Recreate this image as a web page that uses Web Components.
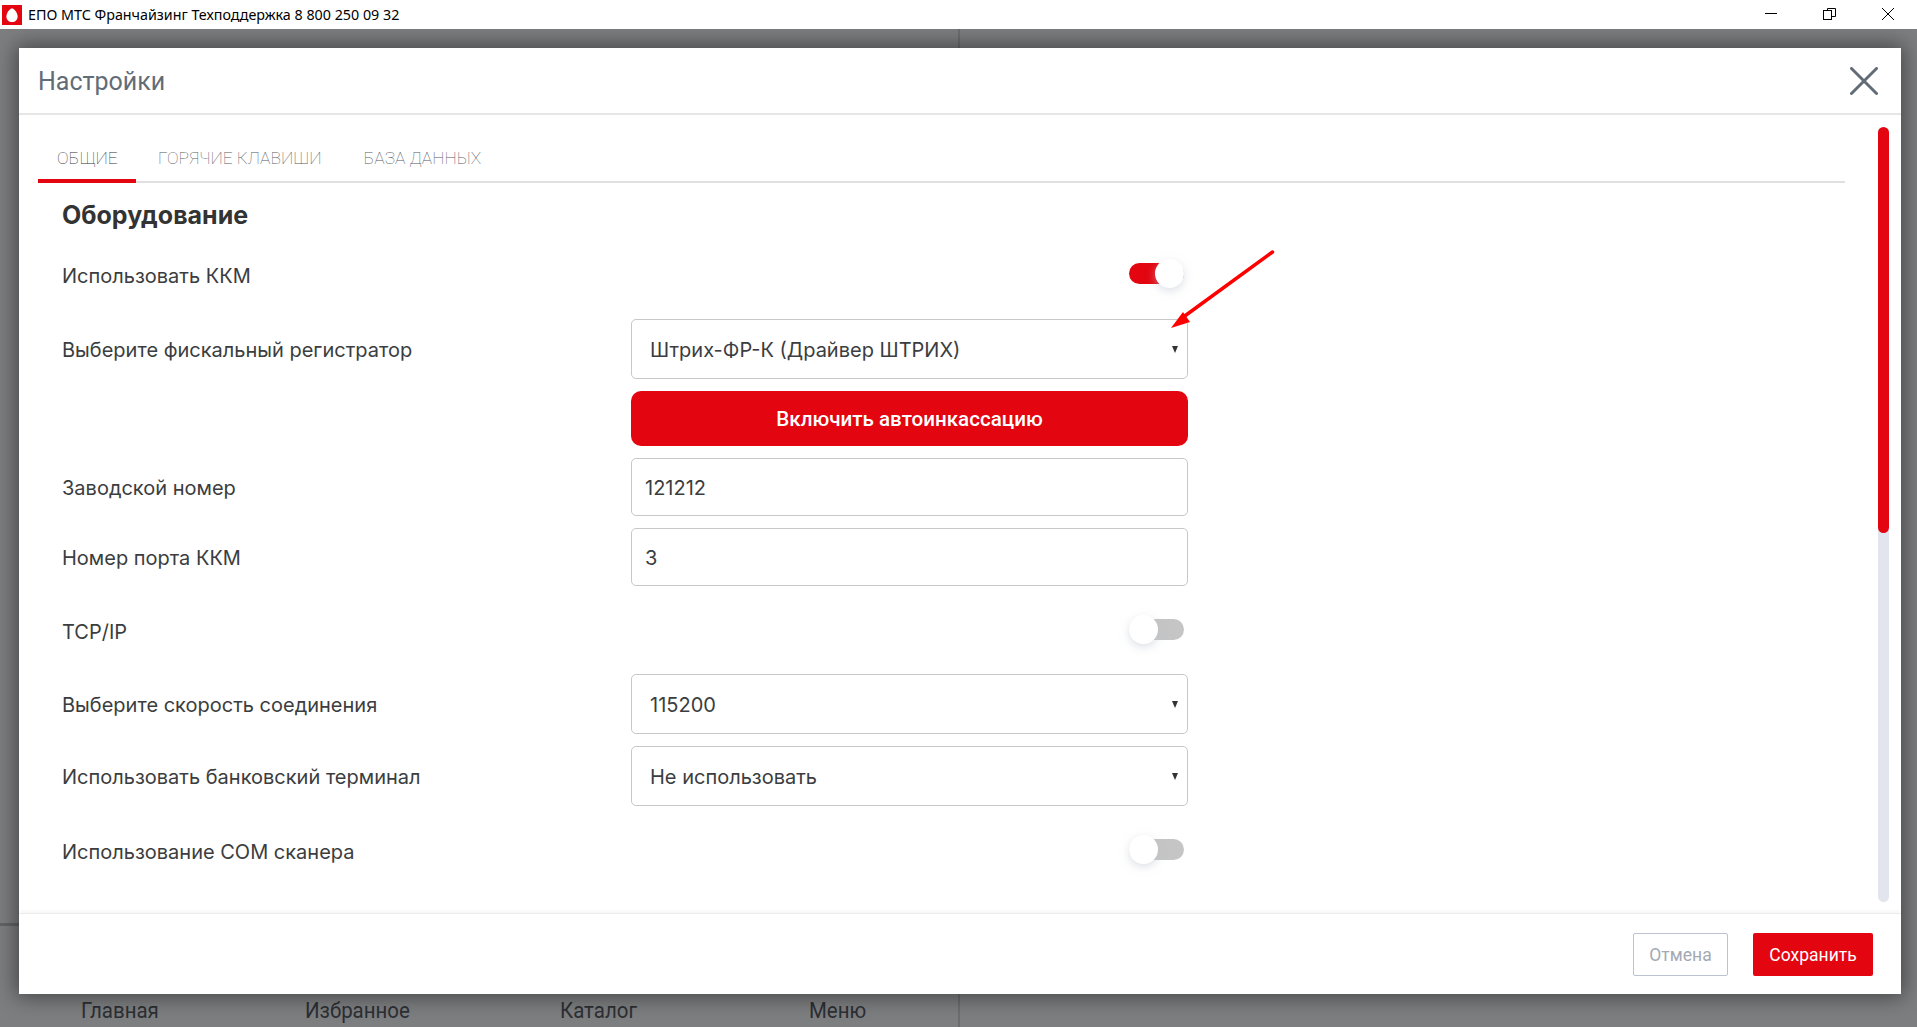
<!doctype html>
<html lang="ru"><head><meta charset="utf-8"><title>Настройки</title>
<style>
html,body{margin:0;height:100%;overflow:hidden;background:#fff}
body{display:flex;flex-direction:column;font-family:Roboto,sans-serif}
</style></head><body>
<app-titlebar></app-titlebar>
<app-stage>
  <settings-dialog>
    <span slot="title">Настройки</span>
    <settings-tabs slot="tabs"></settings-tabs>
    <h-section>Оборудование</h-section>
    <form-row label="Использовать ККМ" style="height:60px;margin-bottom:14px"><ui-toggle on></ui-toggle></form-row>
    <form-row label="Выберите фискальный регистратор" style="margin-bottom:12px"><ui-select value="Штрих-ФР-К (Драйвер ШТРИХ)"></ui-select></form-row>
    <form-row style="margin-bottom:12px"><ui-button>Включить автоинкассацию</ui-button></form-row>
    <form-row label="Заводской номер" style="margin-bottom:12px"><ui-input value="121212"></ui-input></form-row>
    <form-row label="Номер порта ККМ" style="margin-bottom:15px"><ui-input value="3"></ui-input></form-row>
    <form-row label="TCP/IP" style="height:60px;margin-bottom:13px"><ui-toggle></ui-toggle></form-row>
    <form-row label="Выберите скорость соединения" style="margin-bottom:12px"><ui-select value="115200"></ui-select></form-row>
    <form-row label="Использовать банковский терминал" style="margin-bottom:15px"><ui-select value="Не использовать"></ui-select></form-row>
    <form-row label="Использование COM сканера" style="height:60px"><ui-toggle></ui-toggle></form-row>
    <dialog-btn slot="footer" kind="ghost">Отмена</dialog-btn>
    <dialog-btn slot="footer" kind="primary">Сохранить</dialog-btn>
  </settings-dialog>
</app-stage>
<script>
function def(name, css, html){
  customElements.define(name, class extends HTMLElement{
    constructor(){super();const r=this.attachShadow({mode:'open'});
      const get=a=>this.getAttribute(a)||'';
      r.innerHTML='<style>'+css+'</style>'+html(get);}
  });
}
def('app-titlebar',`:host{display:flex;align-items:center;height:29px;flex:none;background:#fff;color:#000;font:14.3px/29px "Noto Sans",sans-serif}
.logo{width:20px;height:20px;margin:0 6px 0 2px;display:block}
.t{flex:1;white-space:nowrap}
.b{display:flex}
.b svg{display:block;width:60px;height:29px}`,
()=>`<svg class="logo" viewBox="0 0 20 20"><rect width="20" height="20" fill="#e30611"/><path d="M10 3.200C7 4.200 4.400 8 4.400 11.400 4.400 14.700 6.800 17 10 17s5.600-2.300 5.600-5.600C15.600 8 13 4.200 10 3.200Z" fill="#fff"/></svg>
<div class="t">ЕПО МТС Франчайзинг Техподдержка 8 800 250 09 32</div>
<div class="b">
<svg viewBox="0 0 60 29"><path d="M28 13.500H40" stroke="#000" stroke-width="1" fill="none"/></svg>
<svg viewBox="0 0 60 29"><g fill="none" stroke="#000" stroke-width="1"><rect x="26.500" y="10.500" width="8" height="9"/><path d="M30.500 10.500V8.500H38.500V16.500H34.500"/></g></svg>
<svg viewBox="0 0 60 29"><path d="M25 8L37 20M37 8L25 20" stroke="#000" stroke-width="1" fill="none"/></svg>
</div>`);

def('app-stage',`:host{display:block;flex:1;position:relative;overflow:hidden;background:#7d7e80;min-height:0}
.v{position:absolute;left:958px;top:0;bottom:0;width:2px;background:#6c6d6f}
.h{position:absolute;left:0;top:894px;width:22px;height:3px;background:#636466}
span{position:absolute;top:968px;white-space:nowrap;color:#2c2f33;font:22px/28px Roboto,sans-serif;transform:scaleX(.93);transform-origin:0 0}`,
()=>`<div class="v"></div><div class="h"></div>
<span style="left:81px">Главная</span><span style="left:305px">Избранное</span><span style="left:560px">Каталог</span><span style="left:809px">Меню</span>
<slot></slot>`);

def('settings-dialog',`:host{position:absolute;left:19px;top:19px;width:1882px;height:946px;background:#fff;display:flex;flex-direction:column;box-shadow:0 0 20px 3px rgba(0,0,0,.45)}
header{height:65px;flex:none;border-bottom:2px solid #e6e6e6;display:flex;align-items:center;justify-content:space-between;padding:0 0 0 19px;color:#626c77;font:400 25px/34px Roboto,sans-serif}
header span{padding-top:2px}
header svg{width:28px;height:28px;margin-right:23px;display:block}
.body{flex:1;min-height:0;padding:0 56px 0 19px;position:relative;overflow:hidden;display:flex;flex-direction:column}
.scroll{position:absolute;right:12px;top:12px;bottom:11px;width:11px;background:#e2e5ee;border-radius:6px}
.thumb{height:406px;background:#e30611;border-radius:6px}
.tabs{flex:none}
.content{padding-left:24px;flex:1;min-height:0}
footer{flex:none;height:81px;border-top:1px solid #ececec;box-shadow:0 -2px 3px rgba(0,0,0,.04);display:flex;justify-content:flex-end;align-items:flex-start;gap:25px;padding:19px 28px 0 0;box-sizing:border-box}
.arrow{position:absolute;left:1131px;top:190px;width:130px;height:100px;overflow:visible}`,
()=>`<header><span><slot name="title"></slot></span><svg viewBox="0 0 28 28"><path d="M1.500 1.500L26.500 26.500M26.500 1.500L1.500 26.500" stroke="#626c77" stroke-width="3" stroke-linecap="round" fill="none"/></svg></header>
<div class="body"><div class="tabs"><slot name="tabs"></slot></div><div class="content"><slot></slot></div>
<div class="scroll"><div class="thumb"></div></div></div>
<footer><slot name="footer"></slot></footer>
<svg class="arrow" viewBox="0 0 130 100"><path d="M122.500 14L32 80" stroke="#fe0000" stroke-width="3.500" stroke-linecap="round" fill="none"/><path d="M21 90L33 74L40 84Z" fill="#fe0000"/></svg>`);

def('settings-tabs',`:host{display:flex;height:68px;box-sizing:border-box;border-bottom:2px solid #e0e0e0;padding-top:25px;font:100 17.400px/26px Roboto,sans-serif;color:#55595f}
div{position:relative;height:41px;padding:5px 20px 0 22px;box-sizing:border-box;white-space:nowrap;text-transform:uppercase}
.a{color:#33363a;width:98px;padding-left:19px;padding-right:0}
.a::after{content:"";position:absolute;left:0;right:0;bottom:-2px;height:4px;background:#e30611}`,
()=>`<div class="a">Общие</div><div>Горячие клавиши</div><div>База данных</div>`);

def('h-section',`:host{display:block;height:62px;font:700 25px/64px Inter,sans-serif;color:#333}`,()=>`<slot></slot>`);

def('form-row',`:host{display:grid;grid-template-columns:569px 557px;align-items:center;color:#3b3d40;font:20px/28px Inter,sans-serif}
.l{white-space:nowrap;padding-top:1px}`,
(g)=>`<div class="l">${g('label')}</div><div><slot></slot></div>`);

def('ui-toggle',`:host{display:flex;justify-content:flex-end;padding-right:4px;height:30px;align-items:center;margin-top:-3px}
.t{position:relative;width:55px;height:21px;border-radius:11px;background:#c5c5c5}
:host([on]) .t{background:#e30611}
.k{position:absolute;top:-4px;left:0;width:29px;height:29px;border-radius:50%;background:#fff;box-shadow:0 3px 8px rgba(188,195,208,.5)}
:host([on]) .k{left:26px}`,()=>`<div class="t"><div class="k"></div></div>`);

def('ui-select',`:host{display:flex;align-items:center;justify-content:space-between;height:60px;box-sizing:border-box;border:1px solid #c8c8c8;border-radius:5px;padding:0 9px 0 18px;font:20px/28px Inter,sans-serif;color:#3b3d40}
span{padding-top:2px}
i{display:block;width:0;height:0;border:3.500px solid transparent;border-top:7px solid #333;border-bottom:0}`,
(g)=>`<span>${g('value')}</span><i></i>`);

def('ui-input',`:host{display:flex;align-items:center;height:58px;box-sizing:border-box;border:1px solid #c8c8c8;border-radius:5px;padding:0 13px;font:20px/28px Inter,sans-serif;color:#3b3d40}
span{padding-top:2px}`,
(g)=>`<span>${g('value')}</span>`);

def('ui-button',`:host{display:flex;align-items:center;justify-content:center;height:55px;background:#e30611;color:#fff;border-radius:10px;font:500 20.600px/28px Roboto,sans-serif}`,()=>`<slot></slot>`);

def('dialog-btn',`:host{display:flex;align-items:center;justify-content:center;height:43px;box-sizing:border-box;border-radius:2px;font:17.500px/24px Roboto,sans-serif}
:host([kind=ghost]){width:95px;border:1px solid #bcc3d0;color:#a3a9b3}
:host([kind=primary]){width:120px;background:#e30611;color:#fff}`,()=>`<slot></slot>`);
</script>
</body></html>
